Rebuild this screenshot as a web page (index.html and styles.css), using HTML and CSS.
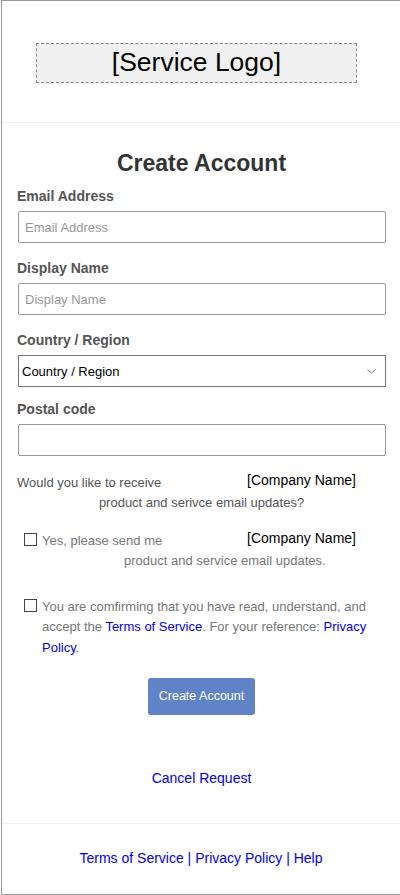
FILE: index.html
```html
<!DOCTYPE html>
<html lang="en">
<head>
<meta charset="utf-8">
<title>Create Account</title>
<link rel="stylesheet" href="styles.css">
</head>
<body>
<div class="page">
  <header class="header">
    <div class="logo">[Service Logo]</div>
  </header>
  <main class="main">
    <h1 class="title">Create Account</h1>
    <form class="form">
      <div class="field">
        <label class="label" for="email">Email Address</label>
        <input class="input" id="email" type="text" placeholder="Email Address">
      </div>
      <div class="field">
        <label class="label" for="display">Display Name</label>
        <input class="input" id="display" type="text" placeholder="Display Name">
      </div>
      <div class="field field-select">
        <label class="label" for="country">Country / Region</label>
        <div class="select-wrap">
          <select class="select" id="country"><option>Country / Region</option></select>
          <svg class="chevron" width="9" height="5" viewBox="0 0 9 5"><polyline points="0.5,0.5 4.5,4.2 8.5,0.5" fill="none" stroke="#7a7a7a" stroke-width="1"/></svg>
        </div>
      </div>
      <div class="field">
        <label class="label" for="postal">Postal code</label>
        <input class="input" id="postal" type="text">
      </div>
      <div class="question">
        <div class="line-top"><span>Would you like to receive</span><span class="company">[Company Name]</span></div>
        <div class="q-line2">product and serivce email updates?</div>
      </div>
      <div class="check check-updates">
        <span class="box"></span>
        <div class="check-body">
          <div class="line-top"><span>Yes, please send me</span><span class="company">[Company Name]</span></div>
          <div class="c-line2">product and service email updates.</div>
        </div>
      </div>
      <div class="check check-terms">
        <span class="box"></span>
        <p class="check-body">You are comfirming that you have read, understand, and accept the <a href="#">Terms of Service</a>. For your reference: <a href="#"><span>Privacy</span> <span>Policy</span></a>.</p>
      </div>
      <div class="actions"><button type="button" class="btn">Create Account</button></div>
      <div class="cancel"><a href="#">Cancel Request</a></div>
    </form>
  </main>
  <footer class="footer"><a href="#">Terms of Service</a> | <a href="#">Privacy Policy</a> | <a href="#">Help</a></footer>
</div>
</body>
</html>
```
FILE: styles.css
```css
* { box-sizing: border-box; }
html, body { margin: 0; padding: 0; overflow: hidden; }
body { font-family: "Liberation Sans", Arial, sans-serif; background: #fff; color: #333; }

a { color: #0000ee; text-decoration: none; }

.page {
  margin-left: 1px;
  height: 895px;
  border: 1px solid #999;
  border-right: none;
  display: flex;
  flex-direction: column;
}

.header {
  padding: 42px 0 39px 34px;
  border-bottom: 1px solid #eee;
}
.logo {
  width: 321px;
  height: 40px;
  border: 1px dashed #888;
  background: #f0f0f0;
  color: #000;
  font-size: 26.5px;
  line-height: 36px;
  text-align: center;
}

.main { padding: 0 14px 0 15px; }

.title {
  margin: 26px 0 11px;
  font-size: 23px;
  line-height: 28px;
  font-weight: bold;
  text-align: center;
  color: #333;
}

.field { margin-bottom: 17px; }
.field-select { margin-bottom: 13.6px; }

.label {
  display: block;
  font-size: 14px;
  line-height: 17px;
  font-weight: bold;
  color: #555;
  margin-bottom: 6px;
}

.input {
  display: block;
  width: calc(100% - 1px);
  margin-left: 1px;
  height: 32px;
  border: 1px solid #999;
  border-radius: 2px;
  padding: 0 6px;
  font-family: "Liberation Sans", Arial, sans-serif;
  font-size: 13px;
  color: #333;
  background: #fff;
  outline: none;
}
.input::placeholder { color: #999; }

.select-wrap { position: relative; margin-left: 1px; }
.select {
  display: block;
  width: 100%;
  height: 32px;
  -webkit-appearance: none;
  appearance: none;
  border: 1px solid #777;
  border-radius: 0;
  padding: 0 3px;
  font-family: "Liberation Sans", Arial, sans-serif;
  font-size: 13px;
  color: #000;
  background: #fff;
}
.chevron { position: absolute; right: 10px; top: 14px; }

.question { margin-top: 12.7px; color: #555; font-size: 13px; }
.line-top {
  display: flex;
  justify-content: space-between;
  align-items: flex-start;
  padding-right: 30px;
  line-height: 20px;
}
.company { font-size: 14px; line-height: 15px; color: #000; }
.q-line2 { text-align: center; line-height: 20px; }

.check { display: flex; align-items: flex-start; color: #777; font-size: 13px; }
.check-updates { margin-top: 18.5px; }
.check-terms { margin-top: 25.8px; }
.box {
  flex: none;
  width: 13px;
  height: 13px;
  margin: 2px 5px 0 7px;
  border: 1px solid #444;
  background: #fff;
}
.check-body { flex: 1; margin: 0; }
.c-line2 { padding-left: 82px; line-height: 20px; }
.check-terms .check-body { line-height: 20.5px; }

.actions { margin-top: 19.5px; display: flex; justify-content: center; }
.btn {
  height: 37px;
  padding: 0 11px;
  background: #6082c6;
  color: #fff;
  border: none;
  border-radius: 3px;
  font-family: "Liberation Sans", Arial, sans-serif;
  font-size: 12.5px;
}

.cancel { margin-top: 55.6px; text-align: center; font-size: 14px; line-height: 17px; }

.footer {
  margin-top: auto;
  border-top: 1px solid #eee;
  padding: 26px 0 27px;
  text-align: center;
  font-size: 14px;
  line-height: 17px;
  color: #0000ee;
}
```
